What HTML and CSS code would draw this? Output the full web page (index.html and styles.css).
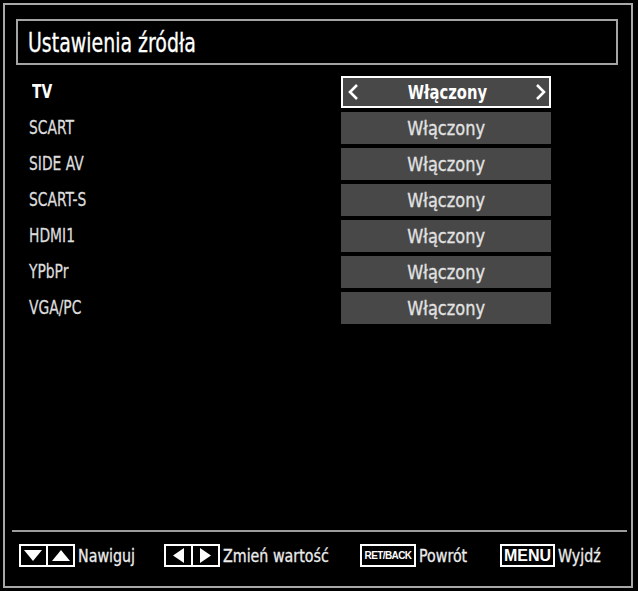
FILE: index.html
```html
<!DOCTYPE html>
<html lang="pl">
<head>
<meta charset="utf-8">
<title>Ustawienia źródła</title>
<link rel="stylesheet" href="styles.css">
</head>
<body>
<div class="frame">
  <div class="title-box"><h1 class="title">Ustawienia źródła</h1></div>
  <ul class="list">
    <li class="row selected">
      <span class="label">TV</span>
      <span class="value">
        <svg class="chev" width="12" height="18" viewBox="0 0 12 18"><polyline points="10,2 3,9 10,16" fill="none" stroke="#fff" stroke-width="2.6" stroke-linejoin="miter"/></svg>
        <span class="value-text">Włączony</span>
        <svg class="chev" width="12" height="18" viewBox="0 0 12 18"><polyline points="2,2 9,9 2,16" fill="none" stroke="#fff" stroke-width="2.6" stroke-linejoin="miter"/></svg>
      </span>
    </li>
    <li class="row"><span class="label">SCART</span><span class="value"><span class="value-text">Włączony</span></span></li>
    <li class="row"><span class="label">SIDE AV</span><span class="value"><span class="value-text">Włączony</span></span></li>
    <li class="row"><span class="label">SCART-S</span><span class="value"><span class="value-text">Włączony</span></span></li>
    <li class="row"><span class="label">HDMI1</span><span class="value"><span class="value-text">Włączony</span></span></li>
    <li class="row"><span class="label">YPbPr</span><span class="value"><span class="value-text">Włączony</span></span></li>
    <li class="row"><span class="label">VGA/PC</span><span class="value"><span class="value-text">Włączony</span></span></li>
  </ul>
  <div class="separator"></div>
  <div class="footer">
    <div class="hint">
      <svg class="key" width="56" height="23" viewBox="0 0 56 23">
        <rect x="1" y="1" width="54" height="21" fill="#000" stroke="#fff" stroke-width="2"/>
        <line x1="28" y1="1" x2="28" y2="22" stroke="#fff" stroke-width="2"/>
        <polygon points="5,6 23,6 14,17" fill="#fff"/>
        <polygon points="33,17 51,17 42,6" fill="#fff"/>
      </svg>
      <span class="hint-text">Nawiguj</span>
    </div>
    <div class="hint">
      <svg class="key" width="56" height="23" viewBox="0 0 56 23">
        <rect x="1" y="1" width="54" height="21" fill="#000" stroke="#fff" stroke-width="2"/>
        <line x1="28" y1="1" x2="28" y2="22" stroke="#fff" stroke-width="2"/>
        <polygon points="20,4 20,19 9,11.5" fill="#fff"/>
        <polygon points="36,4 36,19 47,11.5" fill="#fff"/>
      </svg>
      <span class="hint-text">Zmień wartość</span>
    </div>
    <div class="hint">
      <span class="keycap keycap-small">RET/BACK</span>
      <span class="hint-text">Powrót</span>
    </div>
    <div class="hint">
      <span class="keycap keycap-menu">MENU</span>
      <span class="hint-text">Wyjdź</span>
    </div>
  </div>
</div>
</body>
</html>
```
FILE: styles.css
```css
html, body {
  margin: 0;
  padding: 0;
  background: #000;
}

body {
  width: 638px;
  height: 591px;
  overflow: hidden;
  font-family: "DejaVu Sans Condensed", "DejaVu Sans", sans-serif;
  color: #e4e4e4;
}

.frame {
  box-sizing: border-box;
  margin: 3px 0 0 3px;
  width: 630px;
  height: 585px;
  border: 2px solid #a8a8a8;
  display: flex;
  flex-direction: column;
  padding: 14px 13px 0 11px;
}

.title-box {
  box-sizing: border-box;
  height: 46px;
  border: 2px solid #a4a4a4;
  display: flex;
  align-items: center;
  padding-left: 10px;
}

.title {
  margin: 0;
  font-size: 27px;
  font-weight: normal;
  color: #fff;
  line-height: 1;
  -webkit-text-stroke: 0.3px #fff;
  transform: scaleX(0.78);
  transform-origin: left center;
  white-space: nowrap;
}

.list {
  list-style: none;
  margin: 11px 0 0 0;
  padding: 0;
  display: flex;
  flex-direction: column;
  gap: 4px;
  flex: 1;
}

.row {
  display: flex;
  align-items: center;
  height: 32px;
}

.label {
  box-sizing: border-box;
  width: 325px;
  padding-left: 13px;
  padding-bottom: 3px;
  font-size: 20px;
  color: #dcdcdc;
  -webkit-text-stroke: 0.3px #dcdcdc;
  white-space: nowrap;
  transform: scaleX(0.77);
  transform-origin: 13px center;
}

.selected .label {
  color: #fff;
  -webkit-text-stroke: 0;
  font-weight: bold;
  padding-left: 16px;
  transform-origin: 16px center;
}

.value {
  box-sizing: border-box;
  width: 210px;
  height: 32px;
  background: #484848;
  display: flex;
  align-items: center;
  justify-content: center;
}

.selected .value {
  border: 2px solid #fff;
  justify-content: space-between;
  padding: 0 2px 0 4px;
}

.value-text {
  display: inline-block;
  font-size: 20px;
  color: #e2e2e2;
  -webkit-text-stroke: 0.3px #e2e2e2;
  white-space: nowrap;
  transform: scaleX(0.9);
  transform-origin: center;
}

.selected .value-text {
  color: #fff;
  -webkit-text-stroke: 0;
  font-weight: bold;
  transform: scaleX(0.82);
}

.chev {
  display: block;
}

.separator {
  height: 2px;
  background: #9c9c9c;
  margin: 0 -9px 0 -4px;
}

.footer {
  height: 54px;
  box-sizing: border-box;
  padding: 12px 0 0 3px;
  display: grid;
  grid-template-columns: 145px 196px 140px auto;
  align-items: start;
}

.hint {
  display: flex;
  align-items: center;
  gap: 3px;
  height: 23px;
}

.key {
  display: block;
  flex: none;
}

.hint-text {
  display: inline-block;
  font-size: 18px;
  color: #ececec;
  -webkit-text-stroke: 0.3px #ececec;
  white-space: nowrap;
  transform: scaleX(0.88);
  transform-origin: left center;
}

.keycap {
  box-sizing: border-box;
  height: 23px;
  border: 2px solid #fff;
  display: flex;
  align-items: center;
  justify-content: center;
  font-family: "Liberation Sans", Arial, sans-serif;
  font-weight: bold;
  color: #fff;
  flex: none;
}

.keycap-small {
  width: 56px;
  font-size: 10px;
  letter-spacing: -0.6px;
}

.keycap-menu {
  width: 55px;
  font-size: 16px;
}
```
